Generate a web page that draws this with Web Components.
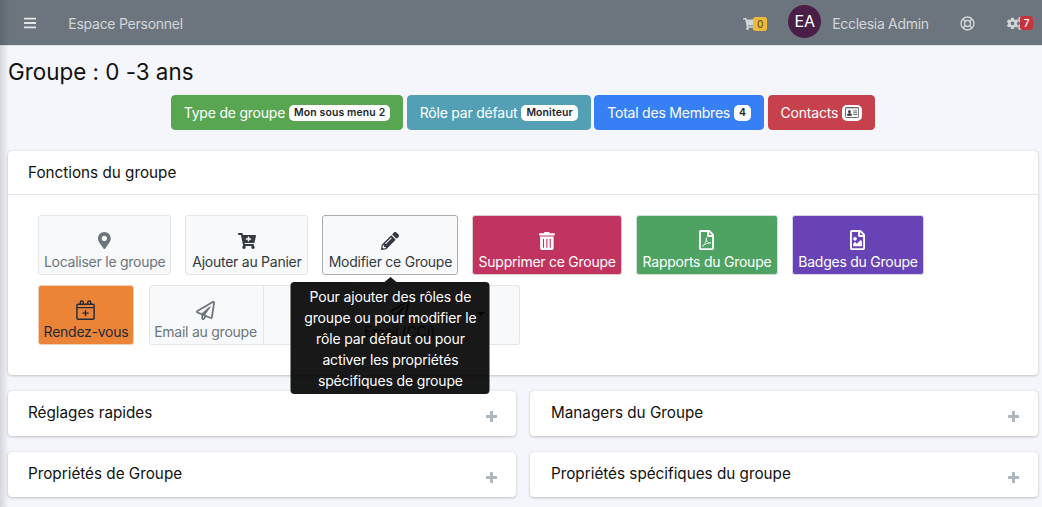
<!DOCTYPE html>
<html lang="fr"><head><meta charset="utf-8"><title>Groupe</title>
<style>
html,body{margin:0;padding:0;height:507px;overflow:hidden}
body{background:#f4f6fb;font-family:Inter,"Liberation Sans",sans-serif;color:#111;position:relative}
app-page{display:block}
</style></head><body>
<app-page></app-page>
<script>
const ICONS={
 marker:[384,512,'<path d="M172.268 501.67C26.97 291.031 0 269.413 0 192 0 85.961 85.961 0 192 0s192 85.961 192 192c0 77.413-26.97 99.031-172.268 309.67-9.535 13.774-29.93 13.773-39.464 0zM192 272c44.183 0 80-35.817 80-80s-35.817-80-80-80-80 35.817-80 80 35.817 80 80 80z"/>'],
 cartplus:[576,512,'<path d="M504.717 320H211.572l6.545 32h268.418c15.401 0 26.816 14.301 23.403 29.319l-5.517 24.276C523.112 414.668 536 433.828 536 456c0 31.202-25.519 56.444-56.824 55.994-29.823-.429-54.35-24.631-55.155-54.447-.44-16.287 6.085-31.049 16.803-41.548H231.176C241.553 426.165 248 440.326 248 456c0 31.813-26.528 57.431-58.67 55.938-28.54-1.325-51.751-24.385-53.251-52.917-1.158-22.034 10.436-41.455 28.051-51.586L93.883 64H24C10.745 64 0 53.255 0 40V24C0 10.745 10.745 0 24 0h102.529c11.401 0 21.228 8.021 23.513 19.19L159.208 64H551.99c15.401 0 26.816 14.301 23.403 29.319l-47.273 208C525.637 312.246 515.923 320 504.717 320zM408 168h-48v-40c0-8.837-7.163-16-16-16h-16c-8.837 0-16 7.163-16 16v40h-48c-8.837 0-16 7.163-16 16v16c0 8.837 7.163 16 16 16h48v40c0 8.837 7.163 16 16 16h16c8.837 0 16-7.163 16-16v-40h48c8.837 0 16-7.163 16-16v-16c0-8.837-7.163-16-16-16z"/>'],
 cart:[576,512,'<path d="M528.12 301.319l47.273-208C578.806 78.301 567.391 64 551.99 64H159.208l-9.166-44.81C147.758 8.021 137.93 0 126.529 0H24C10.745 0 0 10.745 0 24v16c0 13.255 10.745 24 24 24h69.883l70.248 343.435C147.325 417.1 136 435.222 136 456c0 30.928 25.072 56 56 56s56-25.072 56-56c0-15.674-6.447-29.835-16.824-40h209.647C430.447 426.165 424 440.326 424 456c0 30.928 25.072 56 56 56s56-25.072 56-56c0-22.172-12.888-41.332-31.579-50.405l5.517-24.276c3.413-15.018-8.002-29.319-23.403-29.319H218.117l-6.545-32h293.145c11.206 0 20.92-7.754 23.403-18.681z"/>'],
 pencil:[512,512,'<path d="M497.9 142.1l-46.1 46.1c-4.7 4.7-12.3 4.7-17 0l-111-111c-4.7-4.7-4.7-12.3 0-17l46.1-46.1c18.7-18.7 49.1-18.7 67.9 0l60.1 60.1c18.8 18.7 18.8 49.1 0 67.9zM284.2 99.8L21.6 362.4.4 483.9c-2.9 16.4 11.4 30.6 27.8 27.8l121.5-21.3 262.6-262.6c4.7-4.7 4.7-12.3 0-17l-111-111c-4.8-4.7-12.4-4.7-17.1 0zM124.1 339.9c-5.5-5.5-5.5-14.3 0-19.8l154-154c5.5-5.5 14.3-5.5 19.8 0s5.5 14.3 0 19.8l-154 154c-5.5 5.5-14.3 5.5-19.8 0zM88 424h48v36.3l-64.5 11.3-31.1-31.1L51.7 376H88v48z"/>'],
 trash:[448,512,'<path d="M32 464a48 48 0 0 0 48 48h288a48 48 0 0 0 48-48V128H32zm272-256a16 16 0 0 1 32 0v224a16 16 0 0 1-32 0zm-96 0a16 16 0 0 1 32 0v224a16 16 0 0 1-32 0zm-96 0a16 16 0 0 1 32 0v224a16 16 0 0 1-32 0zM432 32H312l-9.4-18.7A24 24 0 0 0 281.1 0H166.8a23.72 23.72 0 0 0-21.4 13.3L136 32H16A16 16 0 0 0 0 48v32a16 16 0 0 0 16 16h416a16 16 0 0 0 16-16V48a16 16 0 0 0-16-16z"/>'],
 pdf:[384,512,'<path d="M369.9 97.9L286 14C277 5 264.8-.1 252.1-.1H48C21.5 0 0 21.5 0 48v416c0 26.5 21.5 48 48 48h288c26.5 0 48-21.5 48-48V131.9c0-12.7-5.1-25-14.1-34zM332.1 128H256V51.9l76.1 76.1zM48 464V48h160v104c0 13.3 10.7 24 24 24h104v288H48z"/><path d="M84 420c44-26 84-84 102-170M186 250c-10-34-8-54 2-54s12 26-2 54c14 52 54 84 116 84M302 334c-70-8-150 24-218 86" fill="none" stroke="currentColor" stroke-width="20"/>'],
 image:[384,512,'<path d="M369.9 97.9L286 14C277 5 264.8-.1 252.1-.1H48C21.5 0 0 21.5 0 48v416c0 26.5 21.5 48 48 48h288c26.5 0 48-21.5 48-48V131.9c0-12.7-5.1-25-14.1-34zM332.1 128H256V51.9l76.1 76.1zM48 464V48h160v104c0 13.3 10.7 24 24 24h104v288H48zm32-48h224V288l-23.5-23.5c-4.7-4.7-12.3-4.7-17 0L176 352l-39.5-39.5c-4.7-4.7-12.3-4.7-17 0L80 352v64zm48-240c-26.5 0-48 21.5-48 48s21.5 48 48 48 48-21.5 48-48-21.5-48-48-48z"/>'],
 plane:[512,512,'<path d="M440 6.5L24 246.4c-34.4 19.9-31.1 70.8 5.7 85.9L144 379.6V464c0 46.4 59.2 65.5 86.6 28.6l43.8-59.1 111.9 46.2c5.9 2.4 12.1 3.6 18.3 3.6 8.2 0 16.3-2.1 23.6-6.2 12.8-7.2 21.6-20 23.9-34.5l59.4-387.2c6.1-40.1-36.9-68.8-71.5-48.9zM192 464v-64.6l36.6 15.1L192 464zm212.6-28.7l-153.8-63.5L391 169.5c10.7-15.5-9.5-33.5-23.7-21.2L155.8 332.6 48 288 464 48l-59.4 387.3z"/>'],
 calendar:[20,21,'<g fill="none" stroke="currentColor" stroke-width="1.5"><rect x="1" y="4.5" width="18" height="15.7" rx="1.2"/><path d="M1 8h18M4.5 5V2.6a1.6 1.6 0 0 1 3.2 0V5M12.3 5V2.6a1.6 1.6 0 0 1 3.2 0V5M10 10.5v6.6M6.7 13.8h6.6"/></g>'],
 bars:[448,512,'<path d="M16 132h416c8.837 0 16-7.163 16-16V76c0-8.837-7.163-16-16-16H16C7.163 60 0 67.163 0 76v40c0 8.837 7.163 16 16 16zm0 160h416c8.837 0 16-7.163 16-16v-40c0-8.837-7.163-16-16-16H16c-8.837 0-16 7.163-16 16v40c0 8.837 7.163 16 16 16zm0 160h416c8.837 0 16-7.163 16-16v-40c0-8.837-7.163-16-16-16H16c-8.837 0-16 7.163-16 16v40c0 8.837 7.163 16 16 16z"/>'],
 ring:[16,16,'<g fill="none" stroke="currentColor"><circle cx="8" cy="8" r="6.9" stroke-width="1.5"/><circle cx="8" cy="8" r="3.2" stroke-width="1.4"/><path d="M3.1 3.1l2.6 2.6M12.9 3.1l-2.6 2.6M3.1 12.9l2.6-2.6M12.9 12.9l-2.6-2.6" stroke-width="1.6"/></g>'],
 cogs:[640,512,'<path d="M512.1 191l-8.2 14.3c-3 5.3-9.4 7.5-15.1 5.4-11.8-4.4-22.6-10.7-32.1-18.6-4.6-3.8-5.8-10.5-2.8-15.7l8.2-14.3c-6.9-8-12.3-17.3-15.9-27.4h-16.5c-6 0-11.2-4.3-12.2-10.3-2-12-2.1-24.6 0-37.1 1-6 6.2-10.4 12.2-10.4h16.5c3.6-10.1 9-19.4 15.9-27.4l-8.2-14.3c-3-5.2-1.9-11.9 2.8-15.7 9.5-7.9 20.4-14.2 32.1-18.6 5.7-2.1 12.1.1 15.1 5.4l8.2 14.3c10.5-1.9 21.2-1.9 31.7 0L552 6.3c3-5.3 9.4-7.5 15.1-5.4 11.8 4.4 22.6 10.7 32.1 18.6 4.6 3.8 5.8 10.5 2.8 15.7l-8.2 14.3c6.9 8 12.3 17.3 15.9 27.4h16.5c6 0 11.2 4.3 12.2 10.3 2 12 2.1 24.6 0 37.1-1 6-6.2 10.4-12.2 10.4h-16.5c-3.6 10.1-9 19.4-15.9 27.4l8.2 14.3c3 5.2 1.9 11.9-2.8 15.7-9.5 7.9-20.4 14.2-32.1 18.6-5.7 2.1-12.1-.1-15.1-5.4l-8.2-14.3c-10.4 1.9-21.2 1.9-31.7 0zm-10.5-58.8c38.5 29.6 82.4-14.3 52.8-52.8-38.5-29.7-82.4 14.3-52.8 52.8zM386.3 286.1l33.7 16.8c10.1 5.8 14.5 18.1 10.5 29.1-8.9 24.2-26.4 46.4-42.6 65.8-7.4 8.9-20.2 11.1-30.3 5.3l-29.1-16.8c-16 13.7-34.6 24.6-54.9 31.7v33.6c0 11.6-8.3 21.6-19.7 23.6-24.6 4.2-50.4 4.4-75.9 0-11.5-2-20-11.9-20-23.6V418c-20.3-7.2-38.9-18-54.9-31.7L74 403c-10 5.8-22.9 3.6-30.3-5.3-16.2-19.4-33.3-41.6-42.2-65.7-4-10.9.4-23.2 10.5-29.1l33.3-16.8c-3.9-20.9-3.9-42.4 0-63.4L12 205.8c-10.1-5.8-14.6-18.1-10.5-29 8.9-24.2 26-46.4 42.2-65.8 7.4-8.9 20.2-11.1 30.3-5.3l29.1 16.8c16-13.7 34.6-24.6 54.9-31.7V57.1c0-11.5 8.2-21.5 19.6-23.5 24.6-4.2 50.5-4.4 76-.1 11.5 2 20 11.9 20 23.6v33.6c20.3 7.2 38.9 18 54.9 31.7l29.1-16.8c10-5.8 22.9-3.6 30.3 5.3 16.2 19.4 33.2 41.6 42.1 65.8 4 10.9.1 23.2-10 29.1l-33.7 16.8c3.9 21 3.9 42.5 0 63.5zm-117.6 21.1c59.2-77-28.7-164.9-105.7-105.7-59.2 77 28.7 164.9 105.7 105.7zm243.4 182.7l-8.2 14.3c-3 5.3-9.4 7.5-15.1 5.4-11.8-4.4-22.6-10.7-32.1-18.6-4.6-3.8-5.8-10.5-2.8-15.7l8.2-14.3c-6.9-8-12.3-17.3-15.9-27.4h-16.5c-6 0-11.2-4.3-12.2-10.3-2-12-2.1-24.6 0-37.1 1-6 6.2-10.4 12.2-10.4h16.5c3.6-10.1 9-19.4 15.9-27.4l-8.2-14.3c-3-5.2-1.9-11.9 2.8-15.7 9.5-7.9 20.4-14.2 32.1-18.6 5.7-2.1 12.1.1 15.1 5.4l8.2 14.3c10.5-1.9 21.2-1.9 31.7 0l8.2-14.3c3-5.3 9.4-7.5 15.1-5.4 11.8 4.4 22.6 10.7 32.1 18.6 4.6 3.8 5.8 10.5 2.8 15.7l-8.2 14.3c6.9 8 12.3 17.3 15.9 27.4h16.5c6 0 11.2 4.3 12.2 10.3 2 12 2.1 24.6 0 37.1-1 6-6.2 10.4-12.2 10.4h-16.5c-3.6 10.1-9 19.4-15.9 27.4l8.2 14.3c3 5.2 1.9 11.9-2.8 15.7-9.5 7.9-20.4 14.2-32.1 18.6-5.7 2.1-12.1-.1-15.1-5.4l-8.2-14.3c-10.4 1.9-21.2 1.9-31.7 0zM501.6 431c38.5 29.6 82.4-14.3 52.8-52.8-38.5-29.6-82.4 14.3-52.8 52.8z"/>'],
 idcard:[18,14,'<rect x=".5" y=".5" width="17" height="13" rx="1.5" fill="none" stroke="currentColor"/><rect x=".5" y=".5" width="17" height="2.4" fill="currentColor" opacity=".25"/><circle cx="5.7" cy="6" r="1.8" fill="currentColor"/><path d="M2.6 11c0-2 1.2-3 3.1-3s3.1 1 3.1 3z" fill="currentColor"/><path d="M10.5 5h5M10.5 7.3h5M10.5 9.6h5" stroke="currentColor" stroke-width=".9"/>'],
 caret:[10,5,'<path d="M0 0h10L5 5z"/>']
};
function icon(name,h,style=''){const [w,vh,body]=ICONS[name];return `<svg xmlns="http://www.w3.org/2000/svg" viewBox="0 0 ${w} ${vh}" height="${h}" width="${h*w/vh}" fill="currentColor" style="display:block;${style}" aria-hidden="true">${body}</svg>`}
function def(tag,render,css){customElements.define(tag,class extends HTMLElement{connectedCallback(){if(this.shadowRoot)return;this.attachShadow({mode:'open'}).innerHTML=`<style>${css}</style>`+render(this)}})}

def('nav-bar',()=>`
 <span class="burger">${icon('bars',14)}</span>
 <span class="brand">Espace Personnel</span>
 <span class="sp"></span>
 <span class="cart">${icon('cart',12)}<b class="bd y">0</b></span>
 <span class="av">EA</span>
 <span class="name">Ecclesia Admin</span>
 <span class="ring">${icon('ring',15)}</span>
 <span class="cogs">${icon('cogs',13)}<b class="bd r">7</b></span>`,
`:host{display:flex;align-items:center;height:45px;background:#6c757d;color:#d3d6d9;border-bottom:1px solid #dfe2e6;font-size:14px;letter-spacing:-.2px;box-sizing:content-box}
.burger{margin-left:24px;color:#e4e6e8;margin-top:1px}
.brand{margin-left:32px;margin-top:2px;letter-spacing:-.25px}
.sp{flex:1}
.cart{display:flex;align-items:center;color:#d3d6d9;margin-right:21px;margin-top:2px}
.bd{display:block;font-weight:500;font-size:10px;line-height:14px;height:14px;border-radius:3px;text-align:center;letter-spacing:0}
.y{background:#f0b93a;color:#6b5a28;width:14px;margin-left:-3.5px}
.r{background:#c5343e;color:#fff;width:13px;margin-left:-3px;position:relative;top:-1px}
.av{width:33px;height:33px;border-radius:50%;background:#4a1f47;color:#fff;display:flex;align-items:center;justify-content:center;font-size:16px;margin-right:11px;margin-top:-3px;letter-spacing:0}
.name{margin-right:31px;margin-top:2px;letter-spacing:-.3px}
.ring{margin-right:32px;margin-top:2px}
.cogs{display:flex;align-items:center;margin-right:9px;margin-top:2px;color:#d3d6d9}`);

def('pill-btn',h=>`<span class="t"><slot></slot></span><span class="pill${h.getAttribute('icon')?' ic':''}">${h.getAttribute('icon')?icon(h.getAttribute('icon'),11,'color:#333'):h.getAttribute('pill')}</span>`,
`:host{display:inline-flex;align-items:center;height:35px;box-sizing:border-box;padding:0 12px;border-radius:4px;color:#fff;font-size:14px;background:var(--c);border:1px solid var(--c);gap:4px;letter-spacing:-.22px;white-space:nowrap}
.pill{background:#fff;color:#212529;border-radius:5px;height:16px;padding:0 5px;display:flex;align-items:center;font-size:10.4px;font-weight:600;letter-spacing:.15px}
.ic{padding:0 3px}`);

def('action-btn',h=>`${h.getAttribute('icon')?icon(h.getAttribute('icon'),+(h.getAttribute('size')||18)):''}<span><slot></slot></span><slot name="over"></slot>`,
`:host{display:flex;flex-direction:column;align-items:center;justify-content:flex-end;gap:var(--g,3px);position:relative;box-sizing:border-box;height:60px;padding:0 5px 3px;background:var(--bg,#f8f9fa);color:var(--fg,#343a40);border:1px solid var(--bd,#e3e6ea);border-radius:3px;font-size:14px;line-height:18px;white-space:nowrap;letter-spacing:-.25px}
span{display:block}`);

def('tip-box',()=>`<i></i><slot></slot>`,
`:host{position:absolute;z-index:5;top:66px;left:50%;transform:translateX(-50%);width:199px;height:112px;box-sizing:border-box;padding:4px 8px;background:#000;color:#fff;opacity:.9;border-radius:4px;font-size:14px;line-height:21px;text-align:center;white-space:normal;letter-spacing:-.15px}
i{position:absolute;left:50%;top:-5px;margin-left:-6px;border:6px solid transparent;border-top:0;border-bottom:5px solid #000}`);

def('panel-card',h=>`<header><span><slot name="title"></slot></span>${h.hasAttribute('collapsed')?`<svg viewBox="0 0 12 12" width="11" height="11" fill="#adb5bd"><rect x="4.4" width="3.2" height="12" rx=".6"/><rect y="4.4" width="12" height="3.2" rx=".6"/></svg>`:''}</header><slot></slot>`,
`:host{display:block;background:#fff;border-radius:4px;box-shadow:0 0 1px rgba(0,0,0,.13),0 1px 3px rgba(0,0,0,.2)}
header{display:flex;align-items:center;justify-content:space-between;height:43px;padding:0 19px 0 var(--pl,20px);font-size:15.25px;color:#111;border-bottom:var(--hb,1px solid #e3e6ea)}
:host([collapsed]){--hb:0;height:45px}
:host([collapsed]) header{height:43px}
:host([collapsed]) svg{margin-top:8px}`);

def('app-page',()=>`
<div class="edge"></div>
<nav-bar></nav-bar>
<main>
 <h1>Groupe : 0 -3 ans</h1>
 <div class="top">
  <pill-btn style="--c:#58a651" pill="Mon sous menu 2">Type de groupe</pill-btn>
  <pill-btn style="--c:#529fb6" pill="Moniteur">Rôle par défaut</pill-btn>
  <pill-btn style="--c:#367ff5" pill="4">Total des Membres</pill-btn>
  <pill-btn style="--c:#c6414b" icon="idcard">Contacts</pill-btn>
 </div>
 <panel-card class="fn">
  <span slot="title">Fonctions du groupe</span>
  <div class="grid">
   <div class="row">
    <action-btn icon="marker" size="17" style="--fg:#6c757d;--g:4px;width:133.4px">Localiser le groupe</action-btn>
    <action-btn icon="cartplus" size="16" style="--g:4px;width:123px">Ajouter au Panier</action-btn>
    <action-btn icon="pencil" style="width:136px;--bd:#a9aeb3">Modifier ce Groupe
     <tip-box slot="over">Pour ajouter des rôles de groupe ou pour modifier le rôle par défaut ou pour activer les propriétés spécifiques de groupe</tip-box></action-btn>
    <action-btn icon="trash" style="width:149.6px;--bg:#c23460;--fg:#fff;--bd:#dcc">Supprimer ce Groupe</action-btn>
    <action-btn icon="pdf" size="20" style="width:142px;--bg:#4ea362;--fg:#fff;--bd:#cfe0d4">Rapports du Groupe</action-btn>
    <action-btn icon="image" size="20" style="width:132px;--bg:#6743b6;--fg:#fff;--bd:#d8d2ea">Badges du Groupe</action-btn>
   </div>
   <div class="row r2">
    <action-btn icon="calendar" size="20" style="width:96px;--bg:#ec8437;--bd:#f0d0b8;--fg:#212b3a">Rendez-vous</action-btn>
    <div class="group">
     <action-btn icon="plane" size="19" style="width:115px;--fg:#6c757d;padding-left:4px;padding-right:6px;border-radius:3px 0 0 3px">Email au groupe</action-btn>
     <action-btn style="width:93px;border-left:0;border-radius:0"></action-btn>
     <action-btn icon="plane" size="19" style="width:85px;border-left:0;border-right:0;border-radius:0">Email (CCI)</action-btn>
     <action-btn icon="caret" size="4" style="width:78px;border-left:0;border-radius:0 3px 3px 0;justify-content:center;padding-bottom:0;--fg:#343a40"></action-btn>
    </div>
   </div>
  </div>
 </panel-card>
 <div class="two">
  <panel-card collapsed><span slot="title">Réglages rapides</span></panel-card>
  <panel-card collapsed style="--pl:21px"><span slot="title">Managers du Groupe</span></panel-card>
  <panel-card collapsed><span slot="title">Propriétés de Groupe</span></panel-card>
  <panel-card collapsed style="--pl:21px"><span slot="title">Propriétés spécifiques du groupe</span></panel-card>
 </div>
</main>`,
`:host{display:block;position:relative}
.edge{position:absolute;left:0;top:0;width:9px;height:507px;z-index:9;pointer-events:none;background:linear-gradient(90deg,rgba(0,0,0,.13),rgba(0,0,0,0))}
main{padding:0 4px 0 8px}
h1{margin:0;font-weight:400;font-size:22.4px;line-height:26px;padding-top:13px;color:#111;font-feature-settings:"calt" 0}
.top{display:flex;justify-content:center;gap:3.5px;margin-top:10px;margin-bottom:21px}
.grid{padding:20px 30px 30px;display:flex;flex-direction:column;gap:10px}
.row{display:flex;gap:14px}
.group{display:flex}
.r2{gap:15px}
.two{display:grid;grid-template-columns:508px 508px;column-gap:14px;row-gap:16px;margin-top:16px}`);
</script>
</body></html>
